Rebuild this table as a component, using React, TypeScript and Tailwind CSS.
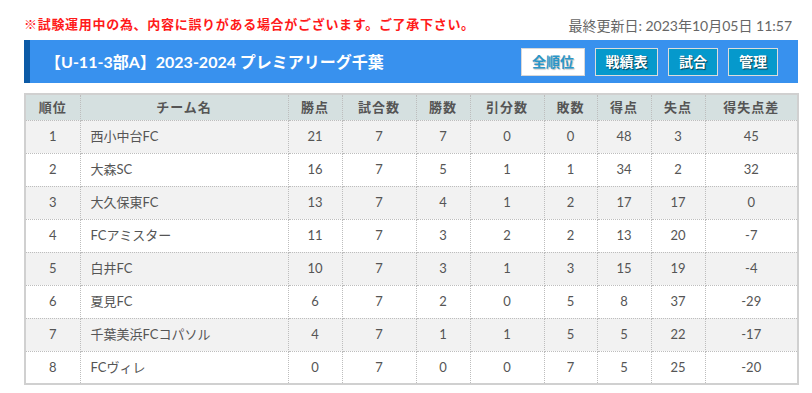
import React from "react";

type Row = {
  rank: number;
  team: string;
  pts: number;
  played: number;
  win: number;
  draw: number;
  lose: number;
  gf: number;
  ga: number;
  gd: number;
};

const rows: Row[] = [
  { rank: 1, team: "西小中台FC", pts: 21, played: 7, win: 7, draw: 0, lose: 0, gf: 48, ga: 3, gd: 45 },
  { rank: 2, team: "大森SC", pts: 16, played: 7, win: 5, draw: 1, lose: 1, gf: 34, ga: 2, gd: 32 },
  { rank: 3, team: "大久保東FC", pts: 13, played: 7, win: 4, draw: 1, lose: 2, gf: 17, ga: 17, gd: 0 },
  { rank: 4, team: "FCアミスター", pts: 11, played: 7, win: 3, draw: 2, lose: 2, gf: 13, ga: 20, gd: -7 },
  { rank: 5, team: "白井FC", pts: 10, played: 7, win: 3, draw: 1, lose: 3, gf: 15, ga: 19, gd: -4 },
  { rank: 6, team: "夏見FC", pts: 6, played: 7, win: 2, draw: 0, lose: 5, gf: 8, ga: 37, gd: -29 },
  { rank: 7, team: "千葉美浜FCコパソル", pts: 4, played: 7, win: 1, draw: 1, lose: 5, gf: 5, ga: 22, gd: -17 },
  { rank: 8, team: "FCヴィレ", pts: 0, played: 7, win: 0, draw: 0, lose: 7, gf: 5, ga: 25, gd: -20 },
];

const headers = ["順位", "チーム名", "勝点", "試合数", "勝数", "引分数", "敗数", "得点", "失点", "得失点差"];
const widths = [55, 208, 54, 74, 54, 74, 53, 54, 54, 93];

const cell = "border border-dotted border-[#bdbdbd] text-center";

export default function App() {
  return (
    <div className="w-[812px] h-[393px] bg-white pl-6 pr-[14px] pt-[16px] font-['Lato','Noto_Sans_CJK_JP',sans-serif] text-[#555]">
      {/* お知らせ + 更新日 */}
      <div className="flex items-center justify-between h-[18px] pr-[6px]">
        <p className="text-[13px] font-bold text-[#ff1a1a] tracking-[0.7px]">
          ※試験運用中の為、内容に誤りがある場合がございます。ご了承下さい。
        </p>
        <p className="text-[14px] text-[#666]">最終更新日: 2023年10月05日 11:57</p>
      </div>

      {/* タイトルバー */}
      <div className="mt-[6px] h-[43px] flex items-center justify-between bg-[#3891ee] border-l-[6px] border-[#0c5aa6] pl-[15px] pr-5">
        <h1 className="text-[16px] font-bold text-white">【U-11-3部A】2023-2024 プレミアリーグ千葉</h1>
        <div className="flex gap-[10px]">
          <button className="h-[28px] w-[64px] bg-white border border-[#d8d8d8] text-[14px] font-bold text-[#2a96c8] [text-shadow:1px_1px_1px_rgba(0,0,0,0.25)]">
            全順位
          </button>
          <button className="h-[28px] w-[63px] bg-[#0599cc] border border-[#dcdcdc] text-[14px] font-bold text-white [text-shadow:1px_1px_1px_rgba(0,0,0,0.6)]">
            戦績表
          </button>
          <button className="h-[28px] w-[50px] bg-[#0599cc] border border-[#dcdcdc] text-[14px] font-bold text-white [text-shadow:1px_1px_1px_rgba(0,0,0,0.6)]">
            試合
          </button>
          <button className="h-[28px] w-[50px] bg-[#0599cc] border border-[#dcdcdc] text-[14px] font-bold text-white [text-shadow:1px_1px_1px_rgba(0,0,0,0.6)]">
            管理
          </button>
        </div>
      </div>

      {/* 順位表 */}
      <table className="mt-[10px] w-[774px] table-fixed border-collapse border-2 border-[#d0d0d0] text-[13px]">
        <colgroup>
          {widths.map((w, i) => (
            <col key={i} style={{ width: w }} />
          ))}
        </colgroup>
        <thead>
          <tr className="bg-[#d5e0e0] h-[26px]">
            {headers.map((h) => (
              <th key={h} className={`${cell} font-bold text-[#555] tracking-[1px]`}>
                {h}
              </th>
            ))}
          </tr>
        </thead>
        <tbody>
          {rows.map((r, i) => (
            <tr key={r.rank} className={`h-[33px] ${i % 2 === 0 ? "bg-[#f2f2f2]" : "bg-white"}`}>
              <td className={cell}>{r.rank}</td>
              <td className={`${cell} text-left pl-[10px]`}>{r.team}</td>
              <td className={cell}>{r.pts}</td>
              <td className={cell}>{r.played}</td>
              <td className={cell}>{r.win}</td>
              <td className={cell}>{r.draw}</td>
              <td className={cell}>{r.lose}</td>
              <td className={cell}>{r.gf}</td>
              <td className={cell}>{r.ga}</td>
              <td className={cell}>{r.gd}</td>
            </tr>
          ))}
        </tbody>
      </table>
    </div>
  );
}
